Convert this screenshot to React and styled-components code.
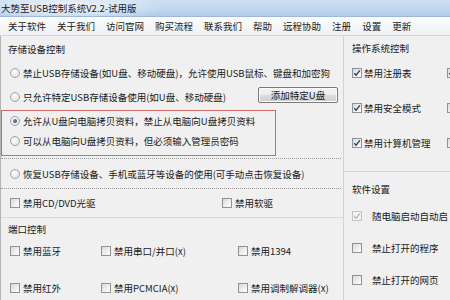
import React from 'react';
import styled, { createGlobalStyle } from 'styled-components';

const GlobalStyle = createGlobalStyle`
  html, body {
    margin: 0;
    padding: 0;
    background: #f0f0f0;
  }
  body {
    font-family: "Noto Sans CJK SC", "Noto Sans", sans-serif;
    font-size: 9.5px;
    color: #1a1a1a;
  }
`;

const Window = styled.div`
  width: 450px;
  height: 300px;
  overflow: hidden;
  display: flex;
  flex-direction: column;
  background: #f0f0f0;
`;

const TitleBar = styled.div`
  height: 16px;
  flex: none;
  display: flex;
  align-items: center;
  padding-left: 1px;
  white-space: nowrap;
  border-bottom: 1px solid #9fb8d8;
  background:
    radial-gradient(ellipse 95px 14px at 70px 8px, rgba(255, 255, 255, 0.8), rgba(255, 255, 255, 0) 100%),
    linear-gradient(180deg, #d0e0f4 0%, #bfd5ef 60%, #b2cbe9 100%);
`;

const MenuBar = styled.div`
  height: 18px;
  flex: none;
  display: flex;
  align-items: center;
  padding-left: 8px;
  background: linear-gradient(180deg, #fbfcfd, #eff1f4);
  border-bottom: 1px solid #d6d6d6;
`;

const MenuItem = styled.span`
  margin-right: 11px;
  white-space: nowrap;
`;

const Body = styled.div`
  flex: 1;
  display: grid;
  grid-template-columns: 343px 1fr;
  min-height: 0;
`;

const LeftCol = styled.div`
  display: flex;
  flex-direction: column;
  border-left: 1px solid #b4b4b4;
`;

const RightCol = styled.div`
  display: flex;
  flex-direction: column;
  border-left: 1px solid #d2d2d2;
  overflow: hidden;
`;

const SectionLabel = styled.div`
  height: ${p => p.$h}px;
  display: flex;
  align-items: center;
  padding-left: ${p => p.$pl ?? 7}px;
  white-space: nowrap;
`;

const Row = styled.div`
  height: ${p => p.$h}px;
  display: flex;
  align-items: center;
  padding-left: ${p => p.$pl ?? 9}px;
  padding-right: 5px;
  white-space: nowrap;
`;

const RedBox = styled.div`
  width: 273px;
  height: 42px;
  border: 1px solid #d06868;
  display: flex;
  flex-direction: column;
  padding-bottom: 2px;
  box-sizing: content-box;
`;

const DottedRow = styled(Row)`
  margin-top: 2px;
  margin-right: 2px;
  border-top: 1px dotted #9a9a9a;
  border-bottom: 1px dotted #9a9a9a;
`;

const CheckRow = styled.div`
  display: grid;
  grid-template-columns: ${p => p.$cols};
  align-items: center;
  height: ${p => p.$h}px;
  padding-left: ${p => p.$pl ?? 9}px;
  white-space: nowrap;
`;

const CdRow = styled(CheckRow)`
  border-bottom: 1px solid #d9d9d9;
`;

const PortList = styled.div`
  display: flex;
  flex-direction: column;
  gap: 15px;
`;

const OsGroup = styled.div`
  display: flex;
  flex-direction: column;
  gap: 9px;
  padding-bottom: 15px;
  border-bottom: 1px solid #d6d6d6;
`;

const SoftList = styled.div`
  display: flex;
  flex-direction: column;
  gap: 12px;
`;

const Option = styled.label`
  display: flex;
  align-items: center;
  gap: ${p => p.$gap ?? 3}px;
`;

const RadioDot = styled.span`
  width: 8px;
  height: 8px;
  flex: none;
  border-radius: 50%;
  border: 1px solid #a2a2a2;
  background: radial-gradient(circle at 40% 40%, #ffffff 0%, #e6e6e6 70%, #d4d4d4 100%);
  display: flex;
  align-items: center;
  justify-content: center;
  &::after {
    content: '';
    display: ${p => (p.$on ? 'block' : 'none')};
    width: 4px;
    height: 4px;
    border-radius: 50%;
    background: radial-gradient(circle at 35% 35%, #6d8fc4, #1d3a6e);
  }
`;

const Box = styled.span`
  width: 8px;
  height: 8px;
  flex: none;
  border: 1px solid ${p => (p.$disabled ? '#c4c4c4' : '#8f9296')};
  background: ${p => (p.$disabled
    ? '#f3f3f3'
    : 'linear-gradient(135deg, #d9d9d9 0%, #eeeeee 55%, #ffffff 100%)')};
  display: flex;
  align-items: center;
  justify-content: center;
`;

const AddButton = styled.button`
  margin-left: auto;
  width: 80px;
  height: 16px;
  padding: 0;
  margin-top: -4px;
  border: 1px solid #7a7a7a;
  border-radius: 2px;
  font-family: inherit;
  font-size: 9.5px;
  color: #1a1a1a;
  background: linear-gradient(180deg, #f4f4f4 0%, #ebebeb 48%, #dcdcdc 52%, #cfcfcf 100%);
  box-shadow: inset 0 0 0 1px #fbfbfb;
`;

function Radio({ on, children }) {
  return (
    <Option>
      <RadioDot $on={on} />
      <span>{children}</span>
    </Option>
  );
}

function Check({ on, disabled, gap, children }) {
  return (
    <Option $gap={gap}>
      <Box $disabled={disabled}>
        {on && (
          <svg width="8" height="8" viewBox="0 0 8 8">
            <path
              d="M1.2 4.2 L3.1 6.2 L6.9 1.4"
              fill="none"
              stroke={disabled ? '#b8b8b8' : '#2b3c5e'}
              strokeWidth="1.3"
            />
          </svg>
        )}
      </Box>
      {children && <span>{children}</span>}
    </Option>
  );
}

const menus = ['关于软件', '关于我们', '访问官网', '购买流程', '联系我们', '帮助', '远程协助', '注册', '设置', '更新'];

export default function App() {
  return (
    <>
      <GlobalStyle />
      <Window>
        <TitleBar>大势至USB控制系统V2.2-试用版</TitleBar>
        <MenuBar>
          {menus.map(m => (
            <MenuItem key={m}>{m}</MenuItem>
          ))}
        </MenuBar>
        <Body>
          <LeftCol>
            <SectionLabel $h={25}>存储设备控制</SectionLabel>
            <Row $h={23}>
              <Radio>禁止USB存储设备(如U盘、移动硬盘)，允许使用USB鼠标、键盘和加密狗</Radio>
            </Row>
            <Row $h={26}>
              <Radio>只允许特定USB存储设备使用(如U盘、移动硬盘)</Radio>
              <AddButton type="button">添加特定U盘</AddButton>
            </Row>
            <RedBox>
              <Row $h={20} $pl={8}>
                <Radio on>允许从U盘向电脑拷贝资料，禁止从电脑向U盘拷贝资料</Radio>
              </Row>
              <Row $h={20} $pl={8}>
                <Radio>可以从电脑向U盘拷贝资料，但必须输入管理员密码</Radio>
              </Row>
            </RedBox>
            <DottedRow $h={29}>
              <Radio>恢复USB存储设备、手机或蓝牙等设备的使用(可手动点击恢复设备)</Radio>
            </DottedRow>
            <CdRow $h={28} $cols="212px 1fr">
              <Check>禁用CD/DVD光驱</Check>
              <Check>禁用软驱</Check>
            </CdRow>
            <SectionLabel $h={22}>端口控制</SectionLabel>
            <PortList>
              <CheckRow $h={22} $cols="91px 137px 1fr">
                <Check>禁用蓝牙</Check>
                <Check>禁用串口/并口(x)</Check>
                <Check>禁用1394</Check>
              </CheckRow>
              <CheckRow $h={22} $cols="91px 137px 1fr">
                <Check>禁用红外</Check>
                <Check>禁用PCMCIA(x)</Check>
                <Check>禁用调制解调器(x)</Check>
              </CheckRow>
            </PortList>
          </LeftCol>
          <RightCol>
            <SectionLabel $h={24} $pl={8}>操作系统控制</SectionLabel>
            <OsGroup>
              <CheckRow $h={26} $cols="95px 1fr" $pl={8}>
                <Check on gap={2}>禁用注册表</Check>
                <Check on />
              </CheckRow>
              <CheckRow $h={26} $cols="95px 1fr" $pl={8}>
                <Check on gap={2}>禁用安全模式</Check>
                <Check />
              </CheckRow>
              <CheckRow $h={26} $cols="95px 1fr" $pl={8}>
                <Check on gap={2}>禁用计算机管理</Check>
                <Check />
              </CheckRow>
            </OsGroup>
            <SectionLabel $h={34} $pl={8}>软件设置</SectionLabel>
            <SoftList>
              <CheckRow $h={20} $cols="1fr" $pl={8}>
                <Check on disabled gap={10}>随电脑启动自动启</Check>
              </CheckRow>
              <CheckRow $h={20} $cols="1fr" $pl={8}>
                <Check gap={10}>禁止打开的程序</Check>
              </CheckRow>
              <CheckRow $h={20} $cols="1fr" $pl={8}>
                <Check gap={10}>禁止打开的网页</Check>
              </CheckRow>
            </SoftList>
          </RightCol>
        </Body>
      </Window>
    </>
  );
}
